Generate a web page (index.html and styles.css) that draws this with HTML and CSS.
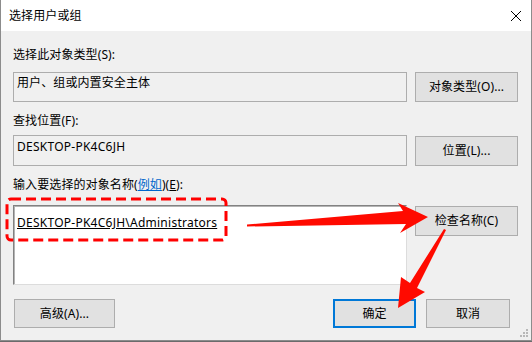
FILE: index.html
```html
<!DOCTYPE html>
<html>
<head>
<meta charset="utf-8">
<link rel="stylesheet" href="styles.css">
</head>
<body>
<div class="window">
  <div class="titlebar">
    <span class="title">选择用户或组</span>
    <svg class="close" width="12" height="12" viewBox="0 0 12 12"><path d="M1 1 L11 11 M11 1 L1 11" stroke="#000" stroke-width="1" fill="none"/></svg>
  </div>
  <div class="content">
    <div class="label l1">选择此对象类型(S):</div>
    <div class="row r1">
      <div class="field">用户、组或内置安全主体</div>
      <div class="btn">对象类型(O)...</div>
    </div>
    <div class="label l2">查找位置(F):</div>
    <div class="row r2">
      <div class="field latin">DESKTOP-PK4C6JH</div>
      <div class="btn">位置(L)...</div>
    </div>
    <div class="label l3">输入要选择的对象名称(<span class="link">例如</span>)(<span class="u">E</span>):</div>
    <div class="row r3">
      <div class="names"><span class="name latin">DESKTOP-PK4C6JH\Administrators</span></div>
      <div class="btn check">检查名称(C)</div>
    </div>
    <div class="actions">
      <div class="btn adv">高级(A)...</div>
      <div class="spacer"></div>
      <div class="btn ok">确定</div>
      <div class="btn cancel">取消</div>
    </div>
  </div>
  <svg class="grip" width="10" height="10" viewBox="0 0 10 10">
    <rect x="7" y="1" width="2" height="2" fill="#b8b8b8"/>
    <rect x="4" y="4" width="2" height="2" fill="#b8b8b8"/>
    <rect x="7" y="4" width="2" height="2" fill="#b8b8b8"/>
    <rect x="1" y="7" width="2" height="2" fill="#b8b8b8"/>
    <rect x="4" y="7" width="2" height="2" fill="#b8b8b8"/>
    <rect x="7" y="7" width="2" height="2" fill="#b8b8b8"/>
  </svg>
</div>
<svg class="annot" width="532" height="342" viewBox="0 0 532 342">
  <rect x="7" y="199" width="219" height="41" rx="4" ry="4" fill="none" stroke="#ff0000" stroke-width="3" stroke-dasharray="10 5"/>
  <polygon points="247,224.5 403,211 398,203 428,217 400,233 406,224 247,226.5" fill="#ff0a00"/>
  <polygon points="444,229 410,283 401,277 398,308 425,292 417,288 446,230" fill="#ff0a00"/>
</svg>
</body>
</html>
```
FILE: styles.css
```css
html, body {
  margin: 0;
  padding: 0;
}
body {
  position: relative;
  width: 532px;
  height: 342px;
  background: #6b6b6b;
  font-family: "Noto Sans", "Noto Sans CJK SC", sans-serif;
  font-size: 12px;
  letter-spacing: 0.1px;
  color: #000;
  overflow: hidden;
}
.latin {
  letter-spacing: 0.25px;
}
.window {
  position: relative;
  box-sizing: border-box;
  width: 532px;
  height: 341px;
  background: #f0f0f0;
  border-left: 1px solid #8c8c8c;
  border-right: 1px solid #8c8c8c;
  border-bottom: 1px solid #8c8c8c;
}
.titlebar {
  height: 31px;
  background: #fff;
  display: flex;
  align-items: center;
  justify-content: space-between;
  padding: 0 9px 0 8px;
}
.title {
  font-size: 12px;
  line-height: 16px;
}
.close {
  display: block;
}
.content {
  padding-left: 12px;
}
.label {
  line-height: 16px;
  height: 16px;
  white-space: nowrap;
}
.l1 { margin-top: 16px; }
.l2 { margin-top: 11px; }
.l3 { margin-top: 11px; }
.link {
  color: #0066cc;
  text-decoration: underline;
}
.u { text-decoration: underline; }
.row {
  display: grid;
  grid-template-columns: 394px 103px;
  column-gap: 8px;
  align-items: start;
}
.r1 { margin-top: 9px; }
.r2 { margin-top: 6px; }
.r3 { margin-top: 12px; }
.field {
  box-sizing: border-box;
  border: 1px solid #adadad;
  background: #f0f0f0;
  padding: 2px 3px 0;
  line-height: 16px;
  white-space: nowrap;
}
.r1 .field { height: 30px; }
.r2 .field { height: 31px; padding-top: 3px; }
.btn {
  box-sizing: border-box;
  background: #e1e1e1;
  border: 1px solid #adadad;
  display: flex;
  align-items: center;
  justify-content: center;
  line-height: 16px;
  white-space: nowrap;
}
.r1 .btn { height: 30px; }
.r2 .btn { height: 30px; margin-top: 1px; }
.names {
  box-sizing: border-box;
  height: 80px;
  background: #fff;
  border: 1px solid;
  border-color: #828282 #dcdcdc #dcdcdc #828282;
  box-shadow: inset 1px 1px 0 #b4b4b4;
  padding: 9px 3px 0;
  line-height: 16px;
  white-space: nowrap;
}
.name {
  text-decoration: underline;
}
.check {
  height: 30px;
  margin-top: 1px;
}
.actions {
  display: flex;
  margin-top: 14px;
  padding-right: 21px;
}
.actions .btn { height: 29px; }
.adv {
  width: 101px;
  margin-left: 1px;
}
.spacer { flex: 1; }
.ok {
  width: 83px;
  border: 2px solid #0078d7;
}
.cancel {
  width: 84px;
  margin-left: 10px;
}
.grip {
  position: absolute;
  right: 2px;
  bottom: 2px;
}
.annot {
  position: absolute;
  left: 0;
  top: 0;
  pointer-events: none;
}
```
